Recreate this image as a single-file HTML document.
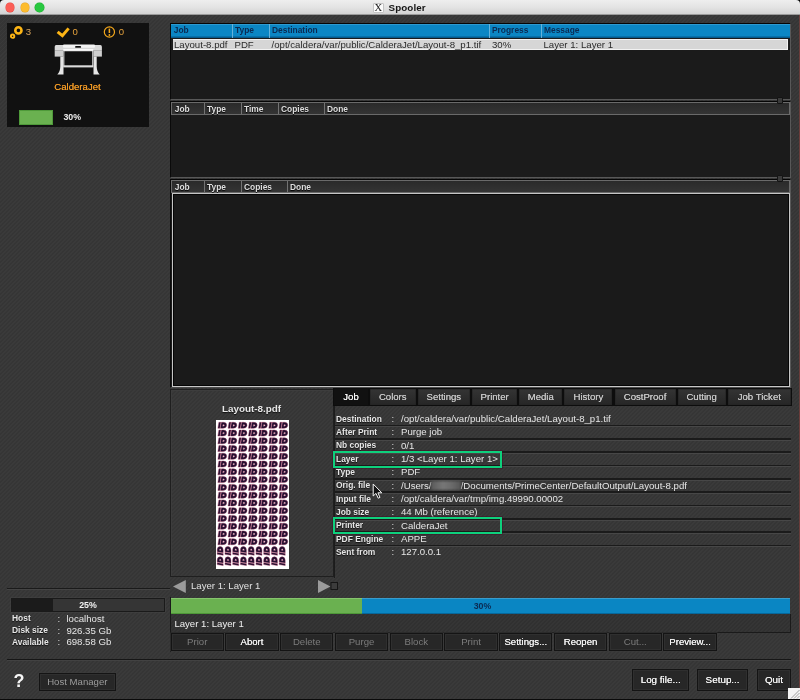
<!DOCTYPE html>
<html><head><meta charset="utf-8">
<style>
*{box-sizing:border-box;margin:0;padding:0}
html,body{width:800px;height:700px;overflow:hidden;background:#000;font-family:"Liberation Sans",sans-serif;}
body{position:relative;color:#ddd;font-size:9.5px;}
.abs{position:absolute}
#title{will-change:transform;left:0;top:0;width:800px;height:15px;background:linear-gradient(#eeeeee,#e4e4e4 50%,#d3d3d3);border-bottom:1px solid #9a9a9a;border-radius:4px 4px 0 0}
.tl{position:absolute;top:3.2px;width:8.8px;height:8.8px;border-radius:50%}
#bg{left:0;top:15px;width:800px;height:684px;background-color:#373737;background-image:repeating-linear-gradient(135deg,rgba(255,255,255,0.014) 0,rgba(255,255,255,0.014) 1.4px,rgba(0,0,0,0.03) 1.4px,rgba(0,0,0,0.03) 2.83px)}
.hdr{position:absolute;height:13px;font-weight:bold;font-size:9.1px;line-height:12.6px;color:#dedede;text-shadow:0 1px 1px #000}
.hdr span{position:absolute;top:0;height:100%;border-left:1px solid #7a7a7a;padding-left:2.2px;white-space:nowrap;transform:scaleX(0.925);transform-origin:0 0}
.hdr span:first-child{border-left:0;padding-left:3px}
.gh{background:linear-gradient(#2a2a2a,#343434);border:1px solid #6a6a6a}
.btn{position:absolute;height:18px;background:#272727;border:1px solid #141414;box-shadow:inset 0 0 0 1px #2f2f2f,0 0 0 0.5px #3c3c3c;color:#7c7c7c;font-size:9.6px;text-align:center;line-height:16.5px;white-space:nowrap}
.btn.on{color:#f2f2f2;text-shadow:0 0 0.25px #fff}
.tab{position:absolute;top:389.2px;height:16.2px;background:linear-gradient(#343434,#2d2d2d 50%,#262626);box-shadow:inset 0 0 0 0.6px #242424;color:#c4c4c4;font-size:9.6px;text-align:center;line-height:16px;white-space:nowrap;text-shadow:0 0 0.2px #ccc}
.tab.on{background:#111;color:#fff;box-shadow:none}
.lbl{position:absolute;left:335.6px;font-weight:bold;font-size:9.1px;line-height:11px;transform:scaleX(0.925);transform-origin:0 0;margin-top:0.9px;color:#e6e6e6;white-space:nowrap;text-shadow:0 1px 1px #111}
.val{position:absolute;left:401px;font-size:9.65px;line-height:11px;color:#e6e6e6;white-space:nowrap}
.col{position:absolute;left:391.5px;font-size:9.5px;line-height:11px;color:#ddd}
.ln{position:absolute;left:335px;width:456px;height:2.6px;background:#1b1b1b;border-bottom:1px solid #474747}
.gbox{position:absolute;left:333.3px;width:169.2px;height:17px;border:2.3px solid #0ed07c;box-shadow:0 0 0 0.6px rgba(70,10,40,0.7)}
.or{color:#e39a3a}
</style></head><body>
<div id="title" class="abs">
 <div class="tl" style="left:5.6px;background:#fc5f57;box-shadow:0 0 0 0.5px #e2463f"></div>
 <div class="tl" style="left:20.5px;background:#fdbc2e;box-shadow:0 0 0 0.5px #e0a028"></div>
 <div class="tl" style="left:35.4px;background:#28c840;box-shadow:0 0 0 0.5px #1eab2e"></div>
 <div class="abs" style="left:373px;top:2.5px;width:10.5px;height:10.5px;background:#fbfbfb;border:1px solid #c4c4c4;border-radius:1px;font-family:'Liberation Serif',serif;font-size:10.5px;line-height:8.5px;text-align:center;color:#222">X</div>
 <div class="abs" style="left:388.6px;top:1px;font-weight:bold;font-size:9.8px;letter-spacing:0.08px;color:#151515;line-height:13.8px">Spooler</div>
</div>
<div id="bg" class="abs"></div>
<div id="fg" class="abs" style="left:0;top:0;width:800px;height:700px;will-change:transform">
<div class="abs" style="left:798.5px;top:15px;width:1.5px;height:684px;background:#6a3c3a"></div>

<!-- left printer panel -->
<div class="abs" style="left:7px;top:23px;width:142px;height:103.5px;background:#111"></div>
<svg class="abs" style="left:7px;top:23px" width="142" height="104" viewBox="0 0 142 104">
 <!-- gears -->
 <circle cx="11.4" cy="7.4" r="3.1" fill="none" stroke="#fdb515" stroke-width="2.6"/>
 <circle cx="5.6" cy="13.2" r="1.7" fill="none" stroke="#fdb515" stroke-width="1.9"/>
 <!-- check -->
 <path d="M50.6,8.8 L55.4,12.7 L61.6,5.4" fill="none" stroke="#fdb515" stroke-width="3" stroke-linejoin="miter"/>
 <!-- warn -->
 <circle cx="102.4" cy="9" r="5.1" fill="none" stroke="#f5a81c" stroke-width="1.2"/>
 <path d="M102.4,5.6 L102.4,10" stroke="#f5a81c" stroke-width="1.5"/><circle cx="102.4" cy="12" r="0.9" fill="#f5a81c"/>
 <!-- printer -->
 <g transform="translate(47.7,21.4)">
  <path d="M1.5,0.6 H45.6 Q47.2,0.6 47.2,2.4 V5.8 H0 V2.4 Q0,0.6 1.5,0.6 Z" fill="#d9d9d9"/>
  <rect x="8.3" y="0" width="32" height="3.4" rx="1" fill="#f4f4f4"/>
  <rect x="20.4" y="1.5" width="6" height="1.9" rx="0.9" fill="#111"/>
  <rect x="0" y="5.8" width="8.6" height="6.4" fill="#cfcfcf"/>
  <rect x="38.6" y="5.8" width="8.6" height="6.4" fill="#cfcfcf"/>
  <rect x="8.6" y="4.6" width="30" height="2" fill="#fafafa"/>
  <rect x="9.2" y="6.4" width="28.8" height="15.4" fill="none" stroke="#e8e8e8" stroke-width="0.9"/>
  <rect x="8.6" y="21" width="30" height="2" fill="#dcdcdc"/>
  <path d="M5.6,12.2 H8.8 V30 H2.6 Q5.4,27.5 5.6,22 Z" fill="#e6e6e6"/>
  <path d="M42,12.2 H38.8 V30 H45 Q42.2,27.5 42,22 Z" fill="#e6e6e6"/>
 </g>
</svg>
<div class="abs or" style="left:25.7px;top:25.6px;font-size:9.6px;line-height:11px;color:#d7a35c">3</div>
<div class="abs or" style="left:72.6px;top:25.6px;font-size:9.6px;line-height:11px;color:#e6a23c">0</div>
<div class="abs or" style="left:118.8px;top:25.6px;font-size:9.6px;line-height:11px;color:#e6a23c">0</div>
<div class="abs" style="left:54.3px;top:80.6px;font-size:9.6px;line-height:11px;color:#f29a25;text-shadow:0 0 0.3px #f29a25">CalderaJet</div>
<div class="abs" style="left:18.6px;top:110px;width:34.4px;height:15.4px;background:#6ab150;border:1px solid #4f9a3a"></div>
<div class="abs" style="left:63.4px;top:112.2px;font-size:8.8px;line-height:11px;color:#eee;font-weight:bold">30%</div>

<!-- table 1 -->
<div class="abs" style="left:170px;top:23px;width:621px;height:77px;background:#1b1b1b;border-left:1px solid #0a0a0a;border-top:1px solid #050505;border-right:1px solid #585858;border-bottom:1px solid #585858"></div>
<div class="hdr" style="left:171px;top:24px;width:619px;height:13.5px;background:linear-gradient(#3fa3d6 0,#0b86c4 1.5px,#0b86c4 11.5px,#045a8c 13.5px);color:#0b2a52;text-shadow:none">
 <span style="left:0">Job</span><span style="left:61px;border-color:#6fb6dc">Type</span><span style="left:98px;border-color:#6fb6dc">Destination</span><span style="left:318px;border-color:#6fb6dc">Progress</span><span style="left:370px;border-color:#6fb6dc">Message</span>
</div>
<div class="abs" style="left:173px;top:39px;width:615px;height:10.5px;background:#d6d6d6;border:1px solid #f2f2f2;border-left:0;color:#2a2a2a;font-size:9.65px;line-height:9px;white-space:nowrap">
 <span class="abs" style="left:1px">Layout-8.pdf</span><span class="abs" style="left:61.5px">PDF</span><span class="abs" style="left:98.5px">/opt/caldera/var/public/CalderaJet/Layout-8_p1.tif</span><span class="abs" style="left:319px">30%</span><span class="abs" style="left:370.5px">Layer 1: Layer 1</span>
</div>

<!-- table 2 -->
<div class="abs" style="left:170px;top:101px;width:621px;height:77px;background:#1b1b1b;border-left:1px solid #0a0a0a;border-top:1px solid #050505;border-right:1px solid #585858;border-bottom:1px solid #585858"></div>
<div class="hdr gh" style="left:171px;top:102px;width:619px">
 <span style="left:0">Job</span><span style="left:32px">Type</span><span style="left:69px">Time</span><span style="left:106px">Copies</span><span style="left:152px">Done</span>
</div>
<div class="abs" style="left:776.9px;top:97px;width:6.5px;height:7px;background:#3a3a3a;border:1px solid #141414;border-radius:1px"></div>

<!-- table 3 -->
<div class="abs" style="left:170px;top:179px;width:621px;height:209px;background:#1b1b1b;border-left:1px solid #0a0a0a;border-top:1px solid #050505;border-right:1px solid #585858;border-bottom:1px solid #4a4a4a"></div>
<div class="hdr gh" style="left:171px;top:180px;width:619px">
 <span style="left:0">Job</span><span style="left:32px">Type</span><span style="left:69px">Copies</span><span style="left:115px">Done</span>
</div>
<div class="abs" style="left:776.9px;top:175px;width:6.5px;height:7px;background:#3a3a3a;border:1px solid #141414;border-radius:1px"></div>
<div class="abs" style="left:172px;top:193px;width:618px;height:194px;background:#1a1a1a;border:1.4px solid #c6c6c6;box-shadow:inset 0 0 0 1px #050505"></div>

<!-- preview -->
<div class="abs" style="left:170px;top:388.5px;width:164px;height:188px;border:1px solid #1f1f1f;box-shadow:inset 1px 1px 0 #3d3d3d"></div>
<div class="abs" style="left:170px;top:401.5px;width:163px;text-align:center;font-weight:bold;font-size:9.9px;line-height:13px;color:#e8e8e8;text-shadow:0 1px 1px #111">Layout-8.pdf</div>
<svg class="abs" style="left:215.5px;top:420px" width="73.5" height="149" viewBox="0 0 73.5 149">
<defs>
<g id="bl"><path d="M-4.4,3 L-2.5,3 L-1.5,-3 L-3.4,-3 Z" fill="#1e1030" stroke="#a83058" stroke-width="0.4"/><path d="M-1.9,3 L-0.9,-3 H1.2 Q4.5,-2.8 4.4,0 Q4.2,3 0.6,3 Z M0.7,-0.9 L0.4,0.9 Q2,1 2.2,0 Q2.2,-0.9 0.7,-0.9 Z" fill="#1e1030" fill-rule="evenodd" stroke="#a83058" stroke-width="0.4"/></g>
<g id="bp"><use href="#bl" transform="rotate(-90)"/></g>
</defs>
<rect width="73.5" height="149" fill="#fff"/><use href="#bl" x="6.30" y="5.30"/><use href="#bl" x="16.48" y="5.30"/><use href="#bl" x="26.66" y="5.30"/><use href="#bl" x="36.84" y="5.30"/><use href="#bl" x="47.02" y="5.30"/><use href="#bl" x="57.20" y="5.30"/><use href="#bl" x="67.38" y="5.30"/><use href="#bl" x="6.30" y="13.06"/><use href="#bl" x="16.48" y="13.06"/><use href="#bl" x="26.66" y="13.06"/><use href="#bl" x="36.84" y="13.06"/><use href="#bl" x="47.02" y="13.06"/><use href="#bl" x="57.20" y="13.06"/><use href="#bl" x="67.38" y="13.06"/><use href="#bl" x="6.30" y="20.82"/><use href="#bl" x="16.48" y="20.82"/><use href="#bl" x="26.66" y="20.82"/><use href="#bl" x="36.84" y="20.82"/><use href="#bl" x="47.02" y="20.82"/><use href="#bl" x="57.20" y="20.82"/><use href="#bl" x="67.38" y="20.82"/><use href="#bl" x="6.30" y="28.58"/><use href="#bl" x="16.48" y="28.58"/><use href="#bl" x="26.66" y="28.58"/><use href="#bl" x="36.84" y="28.58"/><use href="#bl" x="47.02" y="28.58"/><use href="#bl" x="57.20" y="28.58"/><use href="#bl" x="67.38" y="28.58"/><use href="#bl" x="6.30" y="36.34"/><use href="#bl" x="16.48" y="36.34"/><use href="#bl" x="26.66" y="36.34"/><use href="#bl" x="36.84" y="36.34"/><use href="#bl" x="47.02" y="36.34"/><use href="#bl" x="57.20" y="36.34"/><use href="#bl" x="67.38" y="36.34"/><use href="#bl" x="6.30" y="44.10"/><use href="#bl" x="16.48" y="44.10"/><use href="#bl" x="26.66" y="44.10"/><use href="#bl" x="36.84" y="44.10"/><use href="#bl" x="47.02" y="44.10"/><use href="#bl" x="57.20" y="44.10"/><use href="#bl" x="67.38" y="44.10"/><use href="#bl" x="6.30" y="51.86"/><use href="#bl" x="16.48" y="51.86"/><use href="#bl" x="26.66" y="51.86"/><use href="#bl" x="36.84" y="51.86"/><use href="#bl" x="47.02" y="51.86"/><use href="#bl" x="57.20" y="51.86"/><use href="#bl" x="67.38" y="51.86"/><use href="#bl" x="6.30" y="59.62"/><use href="#bl" x="16.48" y="59.62"/><use href="#bl" x="26.66" y="59.62"/><use href="#bl" x="36.84" y="59.62"/><use href="#bl" x="47.02" y="59.62"/><use href="#bl" x="57.20" y="59.62"/><use href="#bl" x="67.38" y="59.62"/><use href="#bl" x="6.30" y="67.38"/><use href="#bl" x="16.48" y="67.38"/><use href="#bl" x="26.66" y="67.38"/><use href="#bl" x="36.84" y="67.38"/><use href="#bl" x="47.02" y="67.38"/><use href="#bl" x="57.20" y="67.38"/><use href="#bl" x="67.38" y="67.38"/><use href="#bl" x="6.30" y="75.14"/><use href="#bl" x="16.48" y="75.14"/><use href="#bl" x="26.66" y="75.14"/><use href="#bl" x="36.84" y="75.14"/><use href="#bl" x="47.02" y="75.14"/><use href="#bl" x="57.20" y="75.14"/><use href="#bl" x="67.38" y="75.14"/><use href="#bl" x="6.30" y="82.90"/><use href="#bl" x="16.48" y="82.90"/><use href="#bl" x="26.66" y="82.90"/><use href="#bl" x="36.84" y="82.90"/><use href="#bl" x="47.02" y="82.90"/><use href="#bl" x="57.20" y="82.90"/><use href="#bl" x="67.38" y="82.90"/><use href="#bl" x="6.30" y="90.66"/><use href="#bl" x="16.48" y="90.66"/><use href="#bl" x="26.66" y="90.66"/><use href="#bl" x="36.84" y="90.66"/><use href="#bl" x="47.02" y="90.66"/><use href="#bl" x="57.20" y="90.66"/><use href="#bl" x="67.38" y="90.66"/><use href="#bl" x="6.30" y="98.42"/><use href="#bl" x="16.48" y="98.42"/><use href="#bl" x="26.66" y="98.42"/><use href="#bl" x="36.84" y="98.42"/><use href="#bl" x="47.02" y="98.42"/><use href="#bl" x="57.20" y="98.42"/><use href="#bl" x="67.38" y="98.42"/><use href="#bl" x="6.30" y="106.18"/><use href="#bl" x="16.48" y="106.18"/><use href="#bl" x="26.66" y="106.18"/><use href="#bl" x="36.84" y="106.18"/><use href="#bl" x="47.02" y="106.18"/><use href="#bl" x="57.20" y="106.18"/><use href="#bl" x="67.38" y="106.18"/><use href="#bl" x="6.30" y="113.94"/><use href="#bl" x="16.48" y="113.94"/><use href="#bl" x="26.66" y="113.94"/><use href="#bl" x="36.84" y="113.94"/><use href="#bl" x="47.02" y="113.94"/><use href="#bl" x="57.20" y="113.94"/><use href="#bl" x="67.38" y="113.94"/><use href="#bl" x="6.30" y="121.70"/><use href="#bl" x="16.48" y="121.70"/><use href="#bl" x="26.66" y="121.70"/><use href="#bl" x="36.84" y="121.70"/><use href="#bl" x="47.02" y="121.70"/><use href="#bl" x="57.20" y="121.70"/><use href="#bl" x="67.38" y="121.70"/><use href="#bp" x="4.20" y="130.90"/><use href="#bp" x="11.95" y="130.90"/><use href="#bp" x="19.70" y="130.90"/><use href="#bp" x="27.45" y="130.90"/><use href="#bp" x="35.20" y="130.90"/><use href="#bp" x="42.95" y="130.90"/><use href="#bp" x="50.70" y="130.90"/><use href="#bp" x="58.45" y="130.90"/><use href="#bp" x="66.20" y="130.90"/><use href="#bp" x="4.20" y="141.20"/><use href="#bp" x="11.95" y="141.20"/><use href="#bp" x="19.70" y="141.20"/><use href="#bp" x="27.45" y="141.20"/><use href="#bp" x="35.20" y="141.20"/><use href="#bp" x="42.95" y="141.20"/><use href="#bp" x="50.70" y="141.20"/><use href="#bp" x="58.45" y="141.20"/><use href="#bp" x="66.20" y="141.20"/></svg>
<svg class="abs" style="left:172px;top:579px" width="170" height="16" viewBox="0 0 170 16"><path d="M1,7.5 L13.8,1 V14 Z" fill="#9b9b9b"/><path d="M146,1 L158.5,7.5 L146,14 Z" fill="#9b9b9b"/><rect x="159" y="3.5" width="6.5" height="7" fill="#3c3c3c" stroke="#161616" stroke-width="1"/></svg>
<div class="abs" style="left:191px;top:580.4px;font-size:9.6px;line-height:11px;color:#e0e0e0">Layer 1: Layer 1</div>

<!-- tabs -->
<div class="abs" style="left:333px;top:387.6px;width:459px;height:18.2px;background:#0d0d0d"></div>
<div class="tab on" style="left:334px;width:34px">Job</div>
<div class="tab" style="left:370px;width:45.5px">Colors</div>
<div class="tab" style="left:417.5px;width:52.69999999999999px">Settings</div>
<div class="tab" style="left:472.2px;width:45.00000000000006px">Printer</div>
<div class="tab" style="left:519.2px;width:43.19999999999993px">Media</div>
<div class="tab" style="left:564.4px;width:48.10000000000002px">History</div>
<div class="tab" style="left:614.5px;width:61.10000000000002px">CostProof</div>
<div class="tab" style="left:677.6px;width:48.0px">Cutting</div>
<div class="tab" style="left:727.6px;width:63.39999999999998px">Job Ticket</div>

<div class="abs" style="left:334px;top:405.5px;width:457px;height:172px;border-left:1px solid #1c1c1c"></div>
<div class="lbl" style="top:412.80px">Destination</div><div class="col" style="top:412.80px">:</div><div class="val" style="top:412.80px">/opt/caldera/var/public/CalderaJet/Layout-8_p1.tif</div>
<div class="ln" style="top:424.60px"></div>
<div class="lbl" style="top:426.15px">After Print</div><div class="col" style="top:426.15px">:</div><div class="val" style="top:426.15px">Purge job</div>
<div class="ln" style="top:437.95px"></div>
<div class="lbl" style="top:439.50px">Nb copies</div><div class="col" style="top:439.50px">:</div><div class="val" style="top:439.50px">0/1</div>
<div class="ln" style="top:451.30px"></div>
<div class="lbl" style="top:452.85px">Layer</div><div class="col" style="top:452.85px">:</div><div class="val" style="top:452.85px">1/3 &lt;Layer 1: Layer 1&gt;</div>
<div class="ln" style="top:464.65px"></div>
<div class="lbl" style="top:466.20px">Type</div><div class="col" style="top:466.20px">:</div><div class="val" style="top:466.20px">PDF</div>
<div class="ln" style="top:478.00px"></div>
<div class="lbl" style="top:479.55px">Orig. file</div><div class="col" style="top:479.55px">:</div><div class="val" style="top:479.55px">/Users/<span style="display:inline-block;width:29.2px;height:9px;vertical-align:-1px;background:linear-gradient(90deg,#5a5a5a,#777 40%,#6a6a6a 70%,#555);filter:blur(1.2px)"></span>/Documents/PrimeCenter/DefaultOutput/Layout-8.pdf</div>
<div class="ln" style="top:491.35px"></div>
<div class="lbl" style="top:492.90px">Input file</div><div class="col" style="top:492.90px">:</div><div class="val" style="top:492.90px">/opt/caldera/var/tmp/img.49990.00002</div>
<div class="ln" style="top:504.70px"></div>
<div class="lbl" style="top:506.25px">Job size</div><div class="col" style="top:506.25px">:</div><div class="val" style="top:506.25px">44 Mb (reference)</div>
<div class="ln" style="top:518.05px"></div>
<div class="lbl" style="top:519.60px">Printer</div><div class="col" style="top:519.60px">:</div><div class="val" style="top:519.60px">CalderaJet</div>
<div class="ln" style="top:531.40px"></div>
<div class="lbl" style="top:532.95px">PDF Engine</div><div class="col" style="top:532.95px">:</div><div class="val" style="top:532.95px">APPE</div>
<div class="ln" style="top:544.75px"></div>
<div class="lbl" style="top:546.30px">Sent from</div><div class="col" style="top:546.30px">:</div><div class="val" style="top:546.30px">127.0.0.1</div>

<div class="gbox" style="top:450.5px"></div>
<div class="gbox" style="top:517px"></div>
<svg class="abs" style="left:372px;top:483px" width="12" height="17" viewBox="0 0 12 17"><path d="M1.2,1 V13 L4,10.4 L6.2,15.2 L8,14.4 L5.9,9.8 H9.8 Z" fill="#111" stroke="#f4f4f4" stroke-width="1" stroke-linejoin="round"/></svg>

<!-- left bottom -->
<div class="abs" style="left:7px;top:588px;width:163px;height:2px;background:#1a1a1a;border-bottom:1px solid #444"></div>
<div class="abs" style="left:11px;top:597.5px;width:154px;height:14px;background:#353535;border:1px solid #1a1a1a;box-shadow:0 0 0 0.5px #444"></div>
<div class="abs" style="left:12px;top:598.5px;width:41px;height:12px;background:#1b1b1b"></div>
<div class="abs" style="left:11px;top:597.5px;width:154px;text-align:center;font-weight:bold;font-size:8.8px;line-height:14.5px;color:#f2f2f2">25%</div>
<div class="lbl" style="left:12px;top:612.2px">Host</div><div class="col" style="left:57.4px;top:612.6px">:</div><div class="val" style="left:66.4px;top:612.6px">localhost</div>
<div class="lbl" style="left:12px;top:624.1px">Disk size</div><div class="col" style="left:57.4px;top:624.5px">:</div><div class="val" style="left:66.4px;top:624.5px">926.35 Gb</div>
<div class="lbl" style="left:12px;top:635.9px">Available</div><div class="col" style="left:57.4px;top:636.3px">:</div><div class="val" style="left:66.4px;top:636.3px">698.58 Gb</div>

<!-- progress -->
<div class="abs" style="left:170px;top:597px;width:621px;height:55px;border-left:1px solid #1a1a1a"></div>
<div class="abs" style="left:171px;top:597.7px;width:619px;height:16px;background:#0a86c3;border-top:1px solid #3a9ccc;border-bottom:1px solid #07679a"></div>
<div class="abs" style="left:171px;top:597.7px;width:191px;height:16px;background:#6ab150;border-top:1px solid #86c46e;border-bottom:1px solid #4e9838"></div>
<div class="abs" style="left:173px;top:597.7px;width:619px;text-align:center;font-weight:bold;font-size:8.8px;line-height:16px;color:#0b2a52">30%</div>
<div class="abs" style="left:171px;top:614px;width:620px;height:18.5px;background:rgba(0,0,0,0.08);border-bottom:1px solid #1a1a1a;border-right:1px solid #1a1a1a"></div>
<div class="abs" style="left:174.4px;top:617.6px;font-size:9.6px;line-height:11px;color:#f0f0f0">Layer 1: Layer 1</div>
<div class="btn" style="left:170.60px;top:633px;width:53.3px">Prior</div>
<div class="btn on" style="left:225.36px;top:633px;width:53.3px">Abort</div>
<div class="btn" style="left:280.12px;top:633px;width:53.3px">Delete</div>
<div class="btn" style="left:334.88px;top:633px;width:53.3px">Purge</div>
<div class="btn" style="left:389.64px;top:633px;width:53.3px">Block</div>
<div class="btn" style="left:444.40px;top:633px;width:53.3px">Print</div>
<div class="btn on" style="left:499.16px;top:633px;width:53.3px">Settings...</div>
<div class="btn on" style="left:553.92px;top:633px;width:53.3px">Reopen</div>
<div class="btn" style="left:608.68px;top:633px;width:53.3px">Cut...</div>
<div class="btn on" style="left:663.44px;top:633px;width:53.3px">Preview...</div>


<!-- bottom -->
<div class="abs" style="left:7px;top:659px;width:784px;height:1px;background:#161616;border-bottom:0"></div>
<div class="abs" style="left:7px;top:660px;width:784px;height:1px;background:#424242"></div>
<div class="abs" style="left:13.5px;top:669.5px;font-weight:bold;font-size:18px;line-height:22px;color:#f6f6f6">?</div>
<div class="btn" style="left:38.6px;top:673px;width:77.4px;height:18px;color:#9c9c9c">Host Manager</div>
<div class="btn on" style="left:632.4px;top:668.6px;width:56.6px;height:22.4px;line-height:20.5px;font-size:9.9px">Log file...</div>
<div class="btn on" style="left:697.4px;top:668.6px;width:50.4px;height:22.4px;line-height:20.5px;font-size:9.9px">Setup...</div>
<div class="btn on" style="left:756.6px;top:668.6px;width:34.8px;height:22.4px;line-height:20.5px;font-size:9.9px">Quit</div>
<svg class="abs" style="left:788px;top:688px" width="12" height="11" viewBox="0 0 12 11"><rect width="12" height="11" fill="#f4f4f4"/><path d="M3,10.5 L11.5,2 M6,10.5 L11.5,5 M9,10.5 L11.5,8" stroke="#8a8a8a" stroke-width="0.8"/></svg>
<div class="abs" style="left:0;top:698.6px;width:800px;height:2px;background:#0a0a0a"></div>
</div>
</body></html>
